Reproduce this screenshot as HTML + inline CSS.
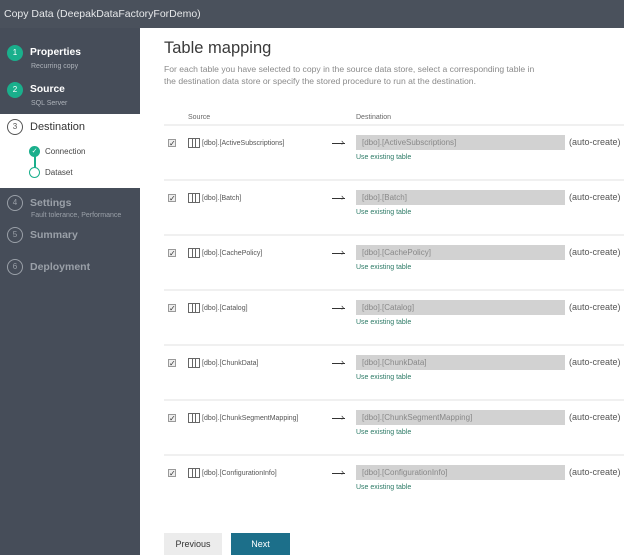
<!DOCTYPE html>
<html><head><style>
*{margin:0;padding:0;box-sizing:border-box}
body{width:624px;height:555px;overflow:hidden;background:#fff;font-family:"Liberation Sans",sans-serif;position:relative}
.a{position:absolute;white-space:nowrap}
.top{left:0;top:0;width:624px;height:28px;background:#4a515c;color:#e6e8ea;font-size:10.5px;padding:8px 0 0 4px}
.side{left:0;top:28px;width:140px;height:527px;background:#464d59}
.wband{left:0;top:114px;width:140px;height:74px;background:#fff}
.num{width:16px;height:16px;border-radius:50%;font-size:8px;text-align:center;line-height:16px;color:#fff}
.t{font-size:10.3px;font-weight:bold;color:#fff}
.s{font-size:7px;color:#aeb3ba}
.g{font-size:10.5px;color:#9aa0a8;font-weight:bold}
.og{border:1px solid #9aa0a8;color:#9aa0a8;line-height:14px}
.sep{left:164px;width:460px;height:2px;background:#f0f0f0}
.cb{width:8px;height:8px;border:1px solid #999;background:#eee;font-size:8px;line-height:7px;text-align:center;color:#333}
.src{font-size:7px;color:#555}
.inp{width:209px;height:15px;background:#d2d2d2;font-size:8px;color:#888;padding:3px 0 0 6px}
.auto{font-size:9px;color:#555}
.lnk{font-size:7px;color:#2c7a66}
.arr{width:13px;height:1px;background:#333}
</style></head><body>
<div class="a top">Copy Data (DeepakDataFactoryForDemo)</div>
<div class="a side"></div>
<div class="a wband"></div>
<div class="a num" style="left:7px;top:45px;background:#1aaf8c">1</div>
<div class="a t" style="left:30px;top:47px">Properties</div>
<div class="a s" style="left:31px;top:63px">Recurring copy</div>
<div class="a num" style="left:7px;top:82px;background:#1aaf8c">2</div>
<div class="a t" style="left:30px;top:84px">Source</div>
<div class="a s" style="left:31px;top:100px">SQL Server</div>
<div class="a num" style="left:7px;top:119px;border:1px solid #555;color:#555;line-height:14px">3</div>
<div class="a" style="left:30px;top:121px;font-size:11px;color:#333">Destination</div>
<div class="a" style="left:34px;top:156px;width:2px;height:12px;background:#1aaf8c"></div>
<div class="a" style="left:29px;top:146px;width:11px;height:11px;border-radius:50%;background:#1aaf8c;color:#fff;font-size:7px;text-align:center;line-height:11px">✓</div>
<div class="a" style="left:45px;top:147px;font-size:8px;color:#444">Connection</div>
<div class="a" style="left:29px;top:167px;width:11px;height:11px;border-radius:50%;border:1.5px solid #1aaf8c;background:#fff"></div>
<div class="a" style="left:45px;top:168px;font-size:8px;color:#444">Dataset</div>
<div class="a num og" style="left:7px;top:195px">4</div>
<div class="a g" style="left:30px;top:197px">Settings</div>
<div class="a s" style="left:31px;top:212px;color:#9aa0a8">Fault tolerance, Performance</div>
<div class="a num og" style="left:7px;top:227px">5</div>
<div class="a g" style="left:30px;top:229px">Summary</div>
<div class="a num og" style="left:7px;top:259px">6</div>
<div class="a g" style="left:30px;top:261px">Deployment</div>

<div class="a" style="left:164px;top:39px;font-size:16.5px;color:#3a3a3a">Table mapping</div>
<div class="a" style="left:164px;top:63px;font-size:8.6px;color:#8a8a8a;line-height:12px">For each table you have selected to copy in the source data store, select a corresponding table in<br>the destination data store or specify the stored procedure to run at the destination.</div>
<div class="a src" style="left:188px;top:114px;color:#666">Source</div>
<div class="a src" style="left:356px;top:114px;color:#666">Destination</div>

<div class="a sep" style="top:124px"></div>
<div class="a sep" style="top:179px"></div>
<div class="a sep" style="top:234px"></div>
<div class="a sep" style="top:289px"></div>
<div class="a sep" style="top:344px"></div>
<div class="a sep" style="top:399px"></div>
<div class="a sep" style="top:454px"></div>

<div style="position:absolute;left:0;top:135px">
<div class="a cb" style="left:168px;top:4px">✓</div>
<svg class="a" style="left:188px;top:3px" width="12" height="10"><rect x="0.5" y="0.5" width="11" height="9" fill="none" stroke="#666"/><line x1="4.5" y1="0" x2="4.5" y2="10" stroke="#666"/><line x1="7.5" y1="0" x2="7.5" y2="10" stroke="#666"/></svg>
<div class="a src" style="left:202px;top:5px">[dbo].[ActiveSubscriptions]</div>
<div class="a arr" style="left:332px;top:8px"></div><div class="a" style="left:341px;top:2px;font-size:9px;color:#333">›</div>
<div class="a inp" style="left:356px;top:0">[dbo].[ActiveSubscriptions]</div>
<div class="a auto" style="left:569px;top:2px">(auto-create)</div>
<div class="a lnk" style="left:356px;top:19px">Use existing table</div>
</div>
<div style="position:absolute;left:0;top:190px">
<div class="a cb" style="left:168px;top:4px">✓</div>
<svg class="a" style="left:188px;top:3px" width="12" height="10"><rect x="0.5" y="0.5" width="11" height="9" fill="none" stroke="#666"/><line x1="4.5" y1="0" x2="4.5" y2="10" stroke="#666"/><line x1="7.5" y1="0" x2="7.5" y2="10" stroke="#666"/></svg>
<div class="a src" style="left:202px;top:5px">[dbo].[Batch]</div>
<div class="a arr" style="left:332px;top:8px"></div><div class="a" style="left:341px;top:2px;font-size:9px;color:#333">›</div>
<div class="a inp" style="left:356px;top:0">[dbo].[Batch]</div>
<div class="a auto" style="left:569px;top:2px">(auto-create)</div>
<div class="a lnk" style="left:356px;top:19px">Use existing table</div>
</div>
<div style="position:absolute;left:0;top:245px">
<div class="a cb" style="left:168px;top:4px">✓</div>
<svg class="a" style="left:188px;top:3px" width="12" height="10"><rect x="0.5" y="0.5" width="11" height="9" fill="none" stroke="#666"/><line x1="4.5" y1="0" x2="4.5" y2="10" stroke="#666"/><line x1="7.5" y1="0" x2="7.5" y2="10" stroke="#666"/></svg>
<div class="a src" style="left:202px;top:5px">[dbo].[CachePolicy]</div>
<div class="a arr" style="left:332px;top:8px"></div><div class="a" style="left:341px;top:2px;font-size:9px;color:#333">›</div>
<div class="a inp" style="left:356px;top:0">[dbo].[CachePolicy]</div>
<div class="a auto" style="left:569px;top:2px">(auto-create)</div>
<div class="a lnk" style="left:356px;top:19px">Use existing table</div>
</div>
<div style="position:absolute;left:0;top:300px">
<div class="a cb" style="left:168px;top:4px">✓</div>
<svg class="a" style="left:188px;top:3px" width="12" height="10"><rect x="0.5" y="0.5" width="11" height="9" fill="none" stroke="#666"/><line x1="4.5" y1="0" x2="4.5" y2="10" stroke="#666"/><line x1="7.5" y1="0" x2="7.5" y2="10" stroke="#666"/></svg>
<div class="a src" style="left:202px;top:5px">[dbo].[Catalog]</div>
<div class="a arr" style="left:332px;top:8px"></div><div class="a" style="left:341px;top:2px;font-size:9px;color:#333">›</div>
<div class="a inp" style="left:356px;top:0">[dbo].[Catalog]</div>
<div class="a auto" style="left:569px;top:2px">(auto-create)</div>
<div class="a lnk" style="left:356px;top:19px">Use existing table</div>
</div>
<div style="position:absolute;left:0;top:355px">
<div class="a cb" style="left:168px;top:4px">✓</div>
<svg class="a" style="left:188px;top:3px" width="12" height="10"><rect x="0.5" y="0.5" width="11" height="9" fill="none" stroke="#666"/><line x1="4.5" y1="0" x2="4.5" y2="10" stroke="#666"/><line x1="7.5" y1="0" x2="7.5" y2="10" stroke="#666"/></svg>
<div class="a src" style="left:202px;top:5px">[dbo].[ChunkData]</div>
<div class="a arr" style="left:332px;top:8px"></div><div class="a" style="left:341px;top:2px;font-size:9px;color:#333">›</div>
<div class="a inp" style="left:356px;top:0">[dbo].[ChunkData]</div>
<div class="a auto" style="left:569px;top:2px">(auto-create)</div>
<div class="a lnk" style="left:356px;top:19px">Use existing table</div>
</div>
<div style="position:absolute;left:0;top:410px">
<div class="a cb" style="left:168px;top:4px">✓</div>
<svg class="a" style="left:188px;top:3px" width="12" height="10"><rect x="0.5" y="0.5" width="11" height="9" fill="none" stroke="#666"/><line x1="4.5" y1="0" x2="4.5" y2="10" stroke="#666"/><line x1="7.5" y1="0" x2="7.5" y2="10" stroke="#666"/></svg>
<div class="a src" style="left:202px;top:5px">[dbo].[ChunkSegmentMapping]</div>
<div class="a arr" style="left:332px;top:8px"></div><div class="a" style="left:341px;top:2px;font-size:9px;color:#333">›</div>
<div class="a inp" style="left:356px;top:0">[dbo].[ChunkSegmentMapping]</div>
<div class="a auto" style="left:569px;top:2px">(auto-create)</div>
<div class="a lnk" style="left:356px;top:19px">Use existing table</div>
</div>
<div style="position:absolute;left:0;top:465px">
<div class="a cb" style="left:168px;top:4px">✓</div>
<svg class="a" style="left:188px;top:3px" width="12" height="10"><rect x="0.5" y="0.5" width="11" height="9" fill="none" stroke="#666"/><line x1="4.5" y1="0" x2="4.5" y2="10" stroke="#666"/><line x1="7.5" y1="0" x2="7.5" y2="10" stroke="#666"/></svg>
<div class="a src" style="left:202px;top:5px">[dbo].[ConfigurationInfo]</div>
<div class="a arr" style="left:332px;top:8px"></div><div class="a" style="left:341px;top:2px;font-size:9px;color:#333">›</div>
<div class="a inp" style="left:356px;top:0">[dbo].[ConfigurationInfo]</div>
<div class="a auto" style="left:569px;top:2px">(auto-create)</div>
<div class="a lnk" style="left:356px;top:19px">Use existing table</div>
</div>

<div class="a" style="left:164px;top:533px;width:58px;height:22px;background:#ececec;font-size:9px;color:#333;text-align:center;line-height:22px">Previous</div>
<div class="a" style="left:231px;top:533px;width:59px;height:22px;background:#1c6f8a;font-size:9px;color:#fff;text-align:center;line-height:22px">Next</div>
</body></html>
